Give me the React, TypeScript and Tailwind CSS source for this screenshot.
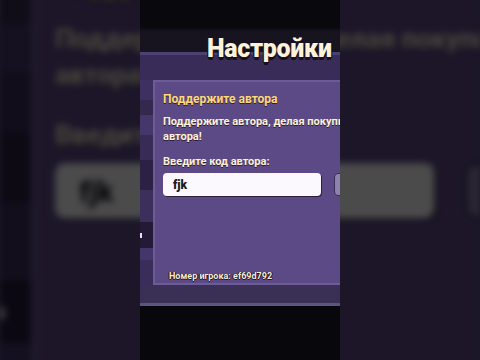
const Screen = () => {
  return (
    <div className="flex flex-col w-[200px] h-[360px] overflow-hidden font-[Roboto,'Noto_Sans',sans-serif]">
      <div className="h-[80px] bg-[linear-gradient(to_bottom,#09080d_0px,#09080d_27px,#16121e_31px,#17131f_52px,#4d4072_52px,#4d4072_55px,#3a2c59_55px,#3a2c59_80px)]">
        <div className="pt-[34px] pl-[67px] text-[25px] leading-[30px] font-black tracking-[-0.3px] text-[#fbf2d9] [text-shadow:1px_1px_0_#17111f,-1px_1px_0_#17111f,1px_-1px_0_#17111f,-1px_-1px_0_#17111f,0_3px_0_#17111f]">
          Настройки
        </div>
      </div>

      <div className="flex h-[205px]">
        <div className="flex flex-col w-[15px]">
          <div className="h-[20px] bg-[#3e3060]" />
          <div className="h-[15px] bg-[#34284f]" />
          <div className="h-[20px] bg-[#45376a]" />
          <div className="h-[25px] bg-[#382b55]" />
          <div className="h-[30px] bg-[#2c2144]" />
          <div className="h-[32px] bg-[#3c2f5c]" />
          <div className="h-[26px] bg-[#241a38] w-[13px] flex items-center">
            <span className="w-[2px] h-[5px] bg-[#e8e0f0]" />
          </div>
          <div className="h-[12px] bg-[#44366a]" />
          <div className="flex-1 bg-[#3a2d59]" />
        </div>
        <div className="flex-1 flex flex-col bg-[#5c4a86] border-l-2 border-t-2 border-b-2 border-[#6c5b97]">
          <div className="pt-[10px] pl-[8px] text-[12px] leading-[14px] font-bold text-[#ffd976] [text-shadow:0_1px_0_#2a1f3f]">
            Поддержите автора
          </div>
          <div className="mt-[8px] pl-[8px] text-[11px] leading-[15px] font-bold text-[#fdf1d6] whitespace-nowrap [text-shadow:0_1px_0_#2a1f3f]">
            <div>Поддержите автора, делая покупки</div>
            <div>автора!</div>
          </div>
          <div className="mt-[10px] pl-[8px] text-[11px] leading-[15px] font-bold text-[#fdf1d6] [text-shadow:0_1px_0_#2a1f3f]">
            Введите код автора:
          </div>
          <div className="mt-[4px] pl-[8px] flex items-center">
            <div className="w-[158px] h-[23px] shrink-0 rounded-[4px] bg-[#fbf9fd] shadow-[1px_1px_0_#2b2040] flex items-center pl-[10px] text-[12px] font-black text-[#1c1a22]">
              fjk
            </div>
            <div className="ml-[13px] w-[24px] h-[23px] shrink-0 rounded-[4px] bg-[#8e83ae] border border-[#3a2d58]" />
          </div>
          <div className="mt-auto pb-[1px] pl-[14px] text-[9px] leading-[12px] font-bold text-[#f6ecd8] [text-shadow:0_1px_0_#1e1630,1px_0_0_#1e1630,-1px_0_0_#1e1630]">
            Номер игрока: ef69d792
          </div>
        </div>
      </div>

      <div className="h-[18px] bg-[#3a2f55]" />
      <div className="h-[3px] bg-[#5f5480]" />
      <div className="flex-1 bg-[#08070b]" />
    </div>
  );
};

const App = () => {
  return (
    <div className="relative w-[480px] h-[360px] overflow-hidden bg-[#1d1727]">
      <div className="absolute inset-0 flex justify-center scale-[2.4] blur-[1.5px] brightness-[0.3]">
        <Screen />
      </div>
      <div className="relative flex justify-center h-full">
        <Screen />
      </div>
    </div>
  );
};

export default App;
